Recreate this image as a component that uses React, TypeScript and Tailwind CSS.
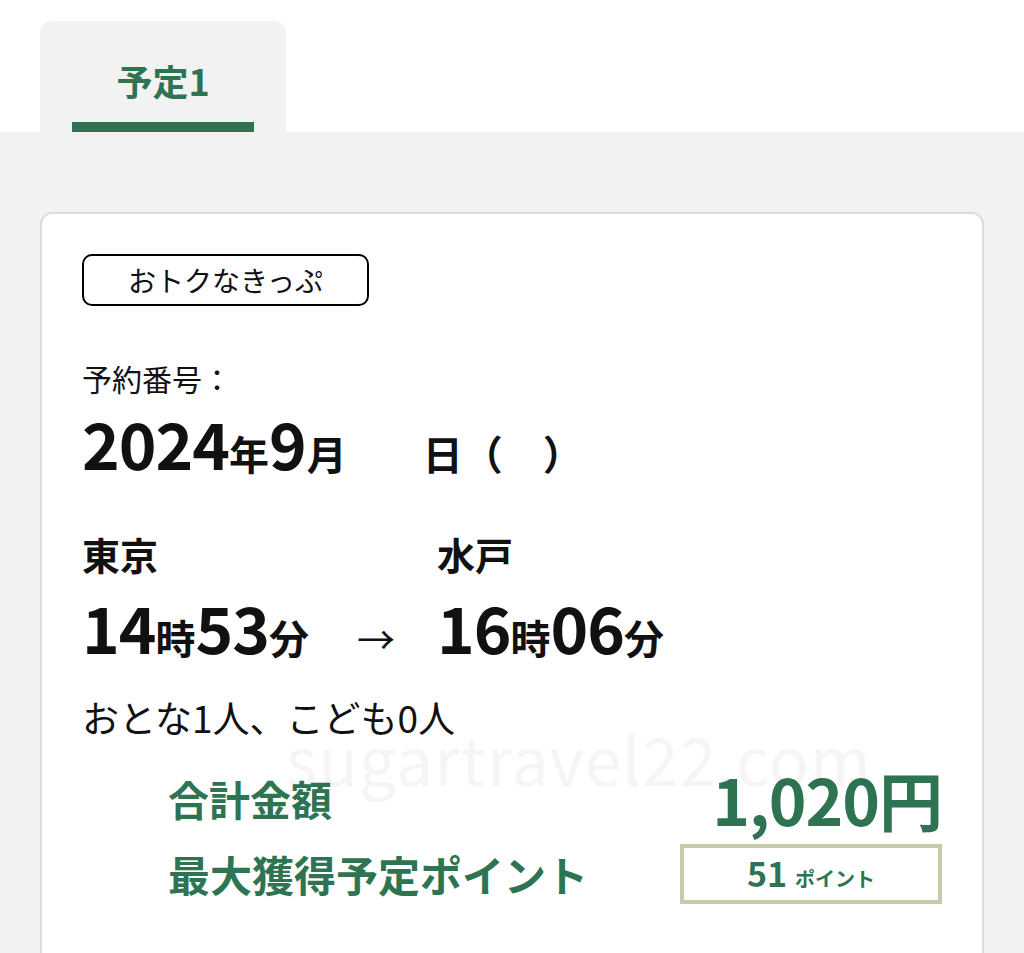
import React from "react";

const G = "text-[#2f7452]";

export default function App() {
  return (
    <div
      className="w-[1024px] h-[953px] overflow-hidden bg-white flex flex-col"
      style={{ fontFamily: '"Noto Sans CJK JP", "Noto Sans", sans-serif' }}
    >
      {/* Tabs */}
      <div className="h-[132px] flex items-end pl-[40px] shrink-0">
        <div className="w-[246px] h-[111px] bg-[#f2f2f2] rounded-t-[12px] flex flex-col items-center">
          <div className={`mt-[34px] text-[36px] leading-[50px] font-bold ${G}`}>予定1</div>
          <div className="mt-auto w-[182px] h-[10px] bg-[#2f7452] -ml-[1px]" />
        </div>
      </div>

      {/* Body */}
      <div className="flex-1 bg-[#f2f2f2] px-[40px] pt-[80px]">
        <div className="relative h-[900px] bg-white border-2 border-[#dcdcdc] rounded-[12px] px-[40px] pt-[40px]">
          <div className="w-[287px] h-[52px] border-2 border-black rounded-[10px] flex items-center justify-center text-[28px] text-[#111]">
            おトクなきっぷ
          </div>

          <div className="mt-[52px] text-[30px] leading-[40px] text-[#111]">予約番号：</div>

          <div className="mt-[8px] flex items-baseline font-bold text-[#111] leading-[72px]">
            <span className="text-[64px] tracking-[-1px]">2024</span>
            <span className="text-[40px]">年</span>
            <span className="text-[64px]">9</span>
            <span className="text-[40px]">月</span>
            <span className="text-[40px] ml-[76px]">日</span>
            <span className="text-[40px]">（</span>
            <span className="text-[40px] ml-[40px]">）</span>
          </div>

          <div className="mt-[40px] grid grid-cols-[355px_1fr] text-[#111]">
            <div className="text-[38px] leading-[50px] font-bold">東京</div>
            <div className="text-[38px] leading-[50px] font-bold">水戸</div>
            <div className="flex items-baseline font-bold leading-[94px]">
              <span className="text-[64px] tracking-[-1px]">14</span>
              <span className="text-[40px]">時</span>
              <span className="text-[64px] tracking-[-1px]">53</span>
              <span className="text-[40px]">分</span>
              <span className="ml-auto mr-[42px] text-[38px] font-normal">→</span>
            </div>
            <div className="flex items-baseline font-bold leading-[94px]">
              <span className="text-[64px] tracking-[-1px]">16</span>
              <span className="text-[40px]">時</span>
              <span className="text-[64px] tracking-[-1px]">06</span>
              <span className="text-[40px]">分</span>
            </div>
          </div>

          <div className="mt-[8px] text-[37px] leading-[48px] text-[#111]">おとな1人、こども0人</div>

          <div className="mt-[25px] pl-[86px] grid grid-cols-[1fr_262px] items-center gap-y-[14px]">
            <div className={`text-[41px] font-bold leading-[56px] ${G}`}>合計金額</div>
            <div className={`text-right text-[64px] font-bold leading-[64px] ${G} tracking-[-1px]`}>1,020円</div>
            <div className={`text-[42px] font-bold leading-[56px] ${G}`}>最大獲得予定ポイント</div>
            <div className="h-[60px] border-[4px] border-[#c6cca9] flex items-baseline justify-center pt-[2px]">
              <span className={`text-[34px] font-bold leading-[46px] ${G}`}>51</span>
              <span className={`ml-[8px] text-[20px] font-bold ${G}`}>ポイント</span>
            </div>
          </div>

          <div className="pointer-events-none absolute left-[244px] top-[510px] text-[66px] leading-none text-[#000] opacity-[0.035] tracking-[1px]">
            sugartravel22.com
          </div>
        </div>
      </div>
    </div>
  );
}
